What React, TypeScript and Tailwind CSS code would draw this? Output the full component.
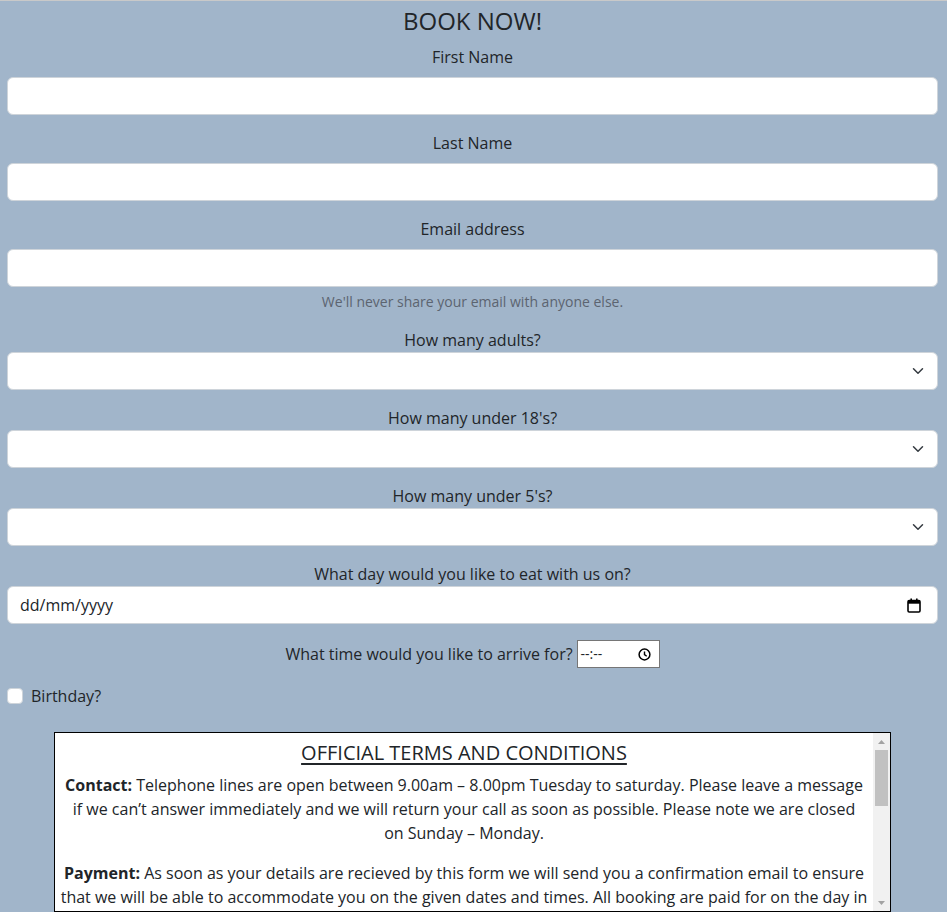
// 예약 폼 — BOOK NOW!
const FONT = { fontFamily: '"Open Sans", "Noto Sans", sans-serif' };

function Chevron() {
  return (
    <svg width="16" height="12" viewBox="0 0 16 16" fill="none" className="shrink-0">
      <path d="M2 5l6 6 6-6" stroke="#343a40" strokeWidth="2" strokeLinecap="round" strokeLinejoin="round" />
    </svg>
  );
}

function CalendarIcon() {
  return (
    <svg width="14" height="15" viewBox="0 0 14 15" className="shrink-0">
      <rect x="1" y="2.5" width="12" height="11.5" rx="1.2" fill="none" stroke="#000" strokeWidth="1.6" />
      <rect x="1" y="2.5" width="12" height="3.2" fill="#000" />
      <rect x="3.4" y="0.5" width="1.6" height="3" fill="#000" />
      <rect x="9" y="0.5" width="1.6" height="3" fill="#000" />
    </svg>
  );
}

function ClockIcon() {
  return (
    <svg width="13" height="13" viewBox="0 0 13 13" className="shrink-0">
      <circle cx="6.5" cy="6.5" r="5.4" fill="none" stroke="#000" strokeWidth="1.5" />
      <path d="M6.5 3.4v3.2l2.2 1.6" fill="none" stroke="#000" strokeWidth="1.4" />
    </svg>
  );
}

function Arrow({ down }: { down?: boolean }) {
  return (
    <svg width="7" height="4" viewBox="0 0 7 4">
      <path d={down ? 'M0 0h7L3.5 4z' : 'M0 4h7L3.5 0z'} fill="#a3a3a3" />
    </svg>
  );
}

function TextField({ label, hint }: { label: string; hint?: string }) {
  return (
    <div className="mb-4">
      <label className="mb-2 block text-center text-[16px] leading-6">{label}</label>
      <div className="h-[38px] rounded-[6px] border border-[#ced4da] bg-white" />
      {hint && (
        <div className="mt-1 text-center text-[14px] leading-[21px] text-[#5c6470]">{hint}</div>
      )}
    </div>
  );
}

function SelectField({ label }: { label: string }) {
  return (
    <div className="mb-4">
      <label className="block text-center text-[16px] leading-6">{label}</label>
      <div className="flex h-[38px] items-center justify-end rounded-[6px] border border-[#ced4da] bg-white pr-[11px]">
        <Chevron />
      </div>
    </div>
  );
}

export default function App() {
  return (
    <div
      style={FONT}
      className="h-[912px] overflow-hidden border-t border-[#c9c9c9] bg-[#a1b5ca] pl-[7px] pr-[9px] text-[#212529]"
    >
      <h1 className="pt-[5px] text-center text-[24px] leading-[29px]">BOOK NOW!</h1>

      <form className="mt-[10px]">
        <TextField label="First Name" />
        <TextField label="Last Name" />
        <TextField label="Email address" hint="We'll never share your email with anyone else." />

        <SelectField label="How many adults?" />
        <SelectField label="How many under 18's?" />
        <SelectField label="How many under 5's?" />

        <div className="mb-4">
          <label className="block text-center text-[16px] leading-6">
            What day would you like to eat with us on?
          </label>
          <div className="flex h-[38px] items-center justify-between rounded-[6px] border border-[#ced4da] bg-white pl-3 pr-4">
            <span className="text-[16px]">dd/mm/yyyy</span>
            <CalendarIcon />
          </div>
        </div>

        <div className="mb-4 flex h-[28px] items-center justify-center gap-1">
          <span className="text-[16px] leading-6">What time would you like to arrive for?</span>
          <div className="flex h-[28px] w-[83px] items-center justify-between border border-[#767676] bg-white pl-[3px] pr-[8px]">
            <span className="text-[14px] leading-none">--:--</span>
            <ClockIcon />
          </div>
        </div>

        <div className="flex items-start gap-2 leading-6">
          <span className="mt-1 block h-4 w-4 rounded-[4px] border border-[#ced4da] bg-white" />
          <span className="text-[16px]">Birthday?</span>
        </div>

        <div className="mx-auto mt-6 flex h-[180px] w-[90%] border border-black bg-white">
          <div className="min-w-0 flex-1 overflow-hidden px-[5px] pt-2 text-center">
            <h2 className="text-[20px] leading-6 underline underline-offset-[3px]">OFFICIAL TERMS AND CONDITIONS</h2>
            <p className="mt-2 text-[16px] leading-6">
              <b>Contact:</b> Telephone lines are open between 9.00am – 8.00pm Tuesday to saturday. Please leave a
              message if we can’t answer immediately and we will return your call as soon as possible. Please note we
              are closed
              <br />
              on Sunday – Monday.
            </p>
            <p className="mt-4 text-[16px] leading-6">
              <b>Payment:</b> As soon as your details are recieved by this form we will send you a confirmation email
              to ensure that we will be able to accommodate you on the given dates and times. All booking are paid for
              on the day in the restaurant, we accept all major cards and cash.
            </p>
          </div>
          <div className="flex w-[17px] shrink-0 flex-col bg-[#f1f1f1]">
            <div className="flex h-[17px] items-center justify-center">
              <Arrow />
            </div>
            <div className="flex-1">
              <div className="mx-[2px] h-[56px] bg-[#c1c1c1]" />
            </div>
            <div className="flex h-[17px] items-center justify-center">
              <Arrow down />
            </div>
          </div>
        </div>
      </form>
    </div>
  );
}
